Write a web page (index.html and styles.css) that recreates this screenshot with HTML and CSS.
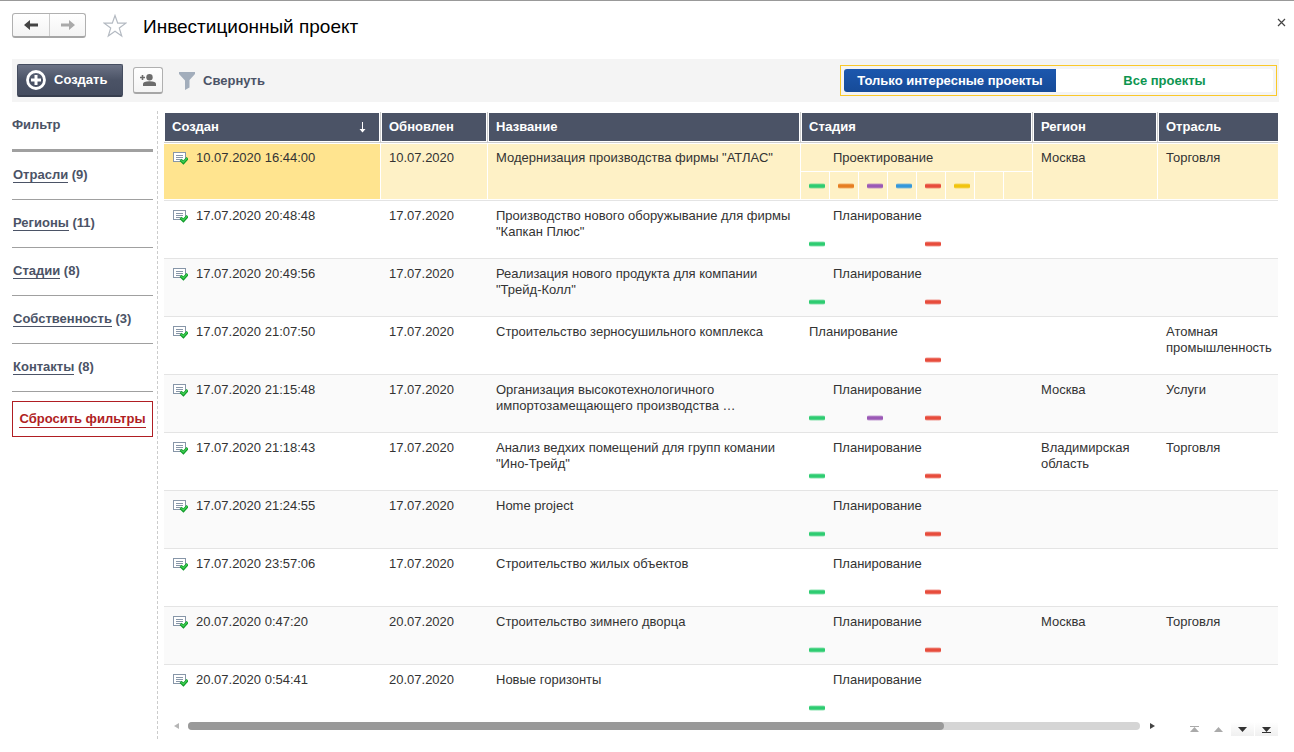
FILE: index.html
```html
<!DOCTYPE html>
<html lang="ru">
<head>
<meta charset="utf-8">
<title>Инвестиционный проект</title>
<link rel="stylesheet" href="styles.css">
</head>
<body>
<svg class="defs" aria-hidden="true">
  <symbol id="doc" viewBox="0 0 16 14">
    <rect x="1.500" y="1.500" width="12" height="9" fill="#fff" stroke="#8796a8"/>
    <path d="M4 4.500h7M4 6.500h7M4 8.500h5" stroke="#8796a8"/>
    <path d="M8.600 8.800l2.800 2.700 4.200-4.500" fill="none" stroke="#119b2a" stroke-width="3"/>
    <path d="M9.200 9.200l2.200 2 3.800-4" fill="none" stroke="#3fd052" stroke-width="1.200"/>
  </symbol>
</svg>
<div class="window">
  <header class="titlebar">
    <div class="history">
      <button type="button" aria-label="Назад"><svg width="14" height="10" viewBox="0 0 14 10"><path d="M0 5l6-5v3.500h8v3H6V10z" fill="#444"/></svg></button>
      <button type="button" aria-label="Вперед" disabled><svg width="14" height="10" viewBox="0 0 14 10"><path d="M14 5L8 0v3.500H0v3h8V10z" fill="#aaa"/></svg></button>
    </div>
    <button type="button" class="plain star" aria-label="В избранное"><svg width="24" height="24" viewBox="0 0 24 24"><path d="M12 1.500l2.700 7.700h8.100l-6.500 4.900 2.400 7.900L12 17.200 5.300 22l2.400-7.900L1.200 9.200h8.100z" fill="#fff" stroke="#b4bac2" stroke-width="1.200"/></svg></button>
    <h1>Инвестиционный проект</h1>
    <button type="button" class="plain close" aria-label="Закрыть"><svg width="9" height="9" viewBox="0 0 9 9"><path d="M1 1l7 7M8 1L1 8" stroke="#444" stroke-width="1.200"/></svg></button>
  </header>

  <div class="toolbar">
    <button type="button" class="create"><svg width="20" height="20" viewBox="0 0 20 20"><circle cx="10" cy="10" r="8.500" fill="none" stroke="#fff" stroke-width="2.800"/><path d="M10 5v10M5 10h10" stroke="#fff" stroke-width="3"/></svg>Создать</button>
    <button type="button" class="add-user" aria-label="Добавить пользователя"><svg width="16" height="12" viewBox="0 0 16 12"><circle cx="9.500" cy="3.200" r="3.200" fill="#6c6c6c"/><path d="M3 12v-2q0-2.800 6.500-2.800T16 10v2z" fill="#6c6c6c"/><path d="M2.500 1v5M0 3.500h5" stroke="#6c6c6c" stroke-width="1.600"/></svg></button>
    <button type="button" class="plain collapse"><svg width="16" height="18" viewBox="0 0 16 18"><path d="M0 0h16v2l-5.500 6v7.500L6 18V8.500L0 2z" fill="#a2adbb"/></svg>Свернуть</button>
    <div class="switch" role="radiogroup" aria-label="Проекты">
      <label class="choice interesting"><input type="radio" name="scope" checked><span>Только интересные проекты</span></label>
      <label class="choice all"><input type="radio" name="scope"><span>Все проекты</span></label>
    </div>
  </div>

  <div class="content">
    <aside class="filters">
      <h2>Фильтр</h2>
      <ul>
        <li><a href="#">Отрасли</a> (9)</li>
        <li><a href="#">Регионы</a> (11)</li>
        <li><a href="#">Стадии</a> (8)</li>
        <li><a href="#">Собственность</a> (3)</li>
        <li><a href="#">Контакты</a> (8)</li>
      </ul>
      <div class="reset"><a href="#">Сбросить фильтры</a></div>
    </aside>

    <main class="list">
      <table>
        <colgroup><col class="c-created"><col class="c-updated"><col class="c-name"><col class="c-stage"><col class="c-region"><col class="c-branch"></colgroup>
        <thead>
          <tr>
            <th scope="col"><div class="head">Создан<svg width="7" height="11" viewBox="0 0 7 11"><path d="M3.500 0v9" stroke="#fff"/><path d="M.5 7h6l-3 3.500z" fill="#fff"/></svg></div></th>
            <th scope="col"><div class="head">Обновлен</div></th>
            <th scope="col"><div class="head">Название</div></th>
            <th scope="col"><div class="head">Стадия</div></th>
            <th scope="col"><div class="head">Регион</div></th>
            <th scope="col"><div class="head">Отрасль</div></th>
          </tr>
        </thead>
        <tbody>
          <tr class="selected"><td><div class="created"><svg width="16" height="14"><use href="#doc"/></svg>10.07.2020 16:44:00</div></td><td>10.07.2020</td><td>Модернизация производства фирмы "АТЛАС"</td><td class="stage"><div class="label">Проектирование</div><div class="marks"><i class="green"></i><i class="orange"></i><i class="purple"></i><i class="blue"></i><i class="red"></i><i class="yellow"></i><i></i><i></i></div></td><td>Москва</td><td>Торговля</td></tr>
          <tr><td><div class="created"><svg width="16" height="14"><use href="#doc"/></svg>17.07.2020 20:48:48</div></td><td>17.07.2020</td><td>Производство нового оборужывание для фирмы "Капкан Плюс"</td><td class="stage"><div class="label">Планирование</div><div class="marks"><i class="green"></i><i></i><i></i><i></i><i class="red"></i></div></td><td></td><td></td></tr>
          <tr><td><div class="created"><svg width="16" height="14"><use href="#doc"/></svg>17.07.2020 20:49:56</div></td><td>17.07.2020</td><td>Реализация нового продукта для компании "Трейд-Колл"</td><td class="stage"><div class="label">Планирование</div><div class="marks"><i class="green"></i><i></i><i></i><i></i><i class="red"></i></div></td><td></td><td></td></tr>
          <tr><td><div class="created"><svg width="16" height="14"><use href="#doc"/></svg>17.07.2020 21:07:50</div></td><td>17.07.2020</td><td>Строительство зерносушильного комплекса</td><td class="stage"><div class="label flush">Планирование</div><div class="marks"><i></i><i></i><i></i><i></i><i class="red"></i></div></td><td></td><td>Атомная промышленность</td></tr>
          <tr><td><div class="created"><svg width="16" height="14"><use href="#doc"/></svg>17.07.2020 21:15:48</div></td><td>17.07.2020</td><td>Организация высокотехнологичного импортозамещающего производства …</td><td class="stage"><div class="label">Планирование</div><div class="marks"><i class="green"></i><i></i><i class="purple"></i><i></i><i class="red"></i></div></td><td>Москва</td><td>Услуги</td></tr>
          <tr><td><div class="created"><svg width="16" height="14"><use href="#doc"/></svg>17.07.2020 21:18:43</div></td><td>17.07.2020</td><td>Анализ ведхих помещений для групп комании "Ино-Трейд"</td><td class="stage"><div class="label">Планирование</div><div class="marks"><i class="green"></i><i></i><i></i><i></i><i class="red"></i></div></td><td>Владимирская область</td><td>Торговля</td></tr>
          <tr><td><div class="created"><svg width="16" height="14"><use href="#doc"/></svg>17.07.2020 21:24:55</div></td><td>17.07.2020</td><td>Home project</td><td class="stage"><div class="label">Планирование</div><div class="marks"><i class="green"></i><i></i><i></i><i></i><i class="red"></i></div></td><td></td><td></td></tr>
          <tr><td><div class="created"><svg width="16" height="14"><use href="#doc"/></svg>17.07.2020 23:57:06</div></td><td>17.07.2020</td><td>Строительство жилых объектов</td><td class="stage"><div class="label">Планирование</div><div class="marks"><i class="green"></i><i></i><i></i><i></i><i class="red"></i></div></td><td></td><td></td></tr>
          <tr><td><div class="created"><svg width="16" height="14"><use href="#doc"/></svg>20.07.2020 0:47:20</div></td><td>20.07.2020</td><td>Строительство зимнего дворца</td><td class="stage"><div class="label">Планирование</div><div class="marks"><i class="green"></i><i></i><i></i><i></i><i class="red"></i></div></td><td>Москва</td><td>Торговля</td></tr>
          <tr><td><div class="created"><svg width="16" height="14"><use href="#doc"/></svg>20.07.2020 0:54:41</div></td><td>20.07.2020</td><td>Новые горизонты</td><td class="stage"><div class="label">Планирование</div><div class="marks"><i class="green"></i></div></td><td></td><td></td></tr>
        </tbody>
      </table>
      <footer class="pager">
        <button type="button" class="plain arrow" aria-label="Влево" disabled><svg width="5" height="6" viewBox="0 0 5 6"><path d="M5 0v6L0 3z" fill="#b5b5b5"/></svg></button>
        <div class="track"><div class="thumb"></div></div>
        <button type="button" class="plain arrow" aria-label="Вправо"><svg width="5" height="6" viewBox="0 0 5 6"><path d="M0 0v6l5-3z" fill="#444"/></svg></button>
        <div class="jumps">
          <button type="button" aria-label="В начало" disabled><svg width="9" height="7" viewBox="0 0 9 7"><path d="M0 0h9v1H0zM4.500 1L9 6H0z" fill="#aaa"/></svg></button>
          <button type="button" aria-label="Вверх" disabled><svg width="9" height="7" viewBox="0 0 9 7"><path d="M4.500 1L9 6H0z" fill="#aaa"/></svg></button>
          <button type="button" aria-label="Вниз"><svg width="9" height="7" viewBox="0 0 9 7"><path d="M0 1h9L4.500 6z" fill="#333"/></svg></button>
          <button type="button" aria-label="В конец"><svg width="9" height="7" viewBox="0 0 9 7"><path d="M0 1h9L4.500 6zM0 6h9v1H0z" fill="#333"/></svg></button>
        </div>
      </footer>
    </main>
  </div>
</div>
</body>
</html>
```
FILE: styles.css
```css
* { box-sizing: border-box; }
body { margin: 0; background: #fff; color: #333; font: 13px/16px "Liberation Sans", Arial, sans-serif; }
button { font: inherit; padding: 0; margin: 0; display: flex; align-items: center; justify-content: center; }
svg { display: block; flex: none; }
.defs { position: absolute; width: 0; height: 0; }
.window { border-top: 1px solid #999; padding: 0 15px 0 12px; }
.plain { background: none; border: 0; }

.titlebar { display: flex; align-items: center; height: 58px; padding-bottom: 9px; }
.history { display: flex; height: 25px; border: 1px solid #b0b0b0; border-bottom: 2px solid #a6a6a6; border-radius: 3px; background: linear-gradient(#fff, #f4f4f4); }
.history button { width: 36px; background: none; border: 0; }
.history button + button { border-left: 1px solid #ccc; }
.star { margin-left: 17px; }
h1 { margin: 0 0 0 16px; padding-top: 2px; font-size: 19px; line-height: 24px; font-weight: 400; color: #000; }
.close { margin: 0 -7px 6px auto; width: 10px; height: 12px; }

.toolbar { display: flex; align-items: center; height: 43px; padding: 0 2px 0 5px; background: #f4f4f4; color: #4b5366; font-weight: 700; }
.create { justify-content: flex-start; gap: 8px; width: 106px; height: 33px; padding-left: 8px; border: 1px solid #454d60; border-bottom: 2px solid #373e4e; border-radius: 2px; background: linear-gradient(#6b7285, #4b5366 50%, #454d60); color: #fff; font-weight: 700; }
.add-user { width: 30px; height: 27px; margin-left: 10px; border: 1px solid #b0b0b0; border-bottom: 2px solid #a6a6a6; border-radius: 3px; background: linear-gradient(#fff, #f4f4f4); }
.collapse { gap: 8px; margin-left: 16px; color: #4b5366; font-weight: 700; }
.switch { display: flex; width: 437px; height: 31px; margin-left: auto; padding: 3px; border: 1px solid #fac828; }
.choice { position: relative; display: flex; align-items: center; justify-content: center; flex: 1; background: #fff; color: #0d9550; cursor: pointer; }
.choice input { position: absolute; opacity: 0; margin: 0; inset: 0; }
.interesting { flex: 0 0 212px; border-radius: 3px 0 0 3px; background: linear-gradient(#1c57ae, #164b98); color: #fff; }
.all { border-radius: 0 3px 3px 0; }

.content { display: flex; padding-top: 9px; }
.filters { flex: 0 0 146px; padding-right: 4px; border-right: 1px dashed #ccc; color: #4b5366; font-weight: 700; }
h2 { margin: 0; padding: 6px 0 16px; border-bottom: 3px solid #a0a0a0; font-size: 13px; line-height: 16px; }
.filters ul { list-style: none; margin: 0; padding: 0; }
.filters li { padding: 15px 1px 16px; border-bottom: 1px solid #a0a0a0; }
.filters a { color: inherit; text-decoration: none; border-bottom: 1px solid; }
.reset { display: flex; align-items: center; justify-content: center; height: 36px; margin-top: 9px; padding-top: 1px; border: 1px solid #b01e23; color: #b01e23; }
.filters .reset a { color: #b01e23; }

.list { flex: 1; min-width: 0; padding: 1px 1px 0 6px; }
table { width: 100%; table-layout: fixed; border-collapse: separate; border-spacing: 0; }
.c-created { width: 217px; }
.c-updated { width: 107px; }
.c-stage { width: 232px; }
.c-region { width: 125px; }
.c-branch { width: 120px; }
th { padding: 1px; border-right: 1px solid #ccc; border-bottom: 1px solid #ccc; text-align: left; }
th:last-child { border-right: 0; padding-right: 0; }
.head { display: flex; align-items: center; justify-content: space-between; height: 28px; padding: 0 13px 0 7px; background: #4b5366; color: #fff; }
td { height: 58px; padding: 7px 8px 0; vertical-align: top; border-bottom: 1px solid #e4e4e4; }
tr:nth-child(odd) td { background: #fafafa; }
.created { display: flex; gap: 8px; }
.created svg { margin-top: 1px; }
.stage { padding: 0; }
.label { height: 29px; padding: 7px 32px 0; border-bottom: 1px solid transparent; }
.flush { padding-left: 8px; }
.marks { display: grid; grid-template-columns: repeat(8, 1fr); height: 28px; }
.marks i { display: flex; align-items: center; padding-left: 8px; border-right: 1px solid transparent; }
.marks i[class]::before { content: ""; width: 16px; height: 6px; border-radius: 2px; background: linear-gradient(transparent, var(--mark) 30%, var(--mark) 70%, transparent); }
.green { --mark: #2ecc71; }
.orange { --mark: #e67e22; }
.purple { --mark: #9b59b6; }
.blue { --mark: #3498db; }
.red { --mark: #e74c3c; }
.yellow { --mark: #f1c40f; }
tbody tr:nth-child(even) td, tbody tr:last-child td { background: #fff; }
tbody tr:last-child td { border-bottom: 0; height: 55px; }
tbody tr.selected td { background: #fef1c6; box-shadow: inset -1px 0 #fff, inset 0 1px #fff, inset 0 -1px #fff; }
tbody tr.selected td:first-child { background: #ffe48f; }
tbody tr.selected td:last-child { box-shadow: inset 0 1px #fff, inset 0 -1px #fff; }
.selected .label, .selected .marks i { border-color: #fff; }

.pager { display: flex; align-items: flex-start; height: 17px; }
.arrow { width: 24px; height: 8px; }
.track { flex: 1; height: 8px; border-radius: 4px; background: #d5d5d5; }
.thumb { width: 79.400%; height: 8px; border-radius: 4px; background: #999; }
.jumps { display: flex; gap: 1px; margin-left: 19px; }
.jumps button { width: 23px; height: 14px; border: 0; background: linear-gradient(#fff, #f0f0f0); }
.jumps button:disabled { background: none; }
```
